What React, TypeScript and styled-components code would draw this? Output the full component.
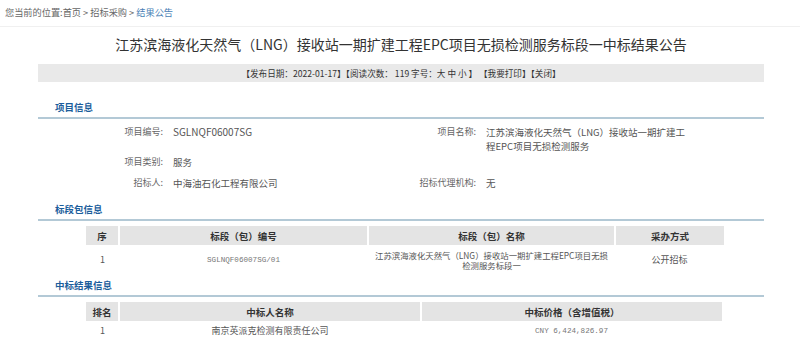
import React from 'react'
import styled, { createGlobalStyle } from 'styled-components'

const GlobalStyle = createGlobalStyle`
	body {
		margin: 0;
		background: #fff;
		font-family: "Noto Sans CJK SC", "Noto Sans", sans-serif;
		color: #333;
	}
`;

const Breadcrumb = styled.div`
	height: 26px;
	line-height: 24px;
	padding-left: 5px;
	font-size: 9.2px;
	color: #666;
	border-bottom: 1px solid #f0f0f0;
	a {
		color: #666;
		text-decoration: none;
	}
	a.current {
		color: #4a7fb5;
	}
`;

const Content = styled.div`
	padding: 0 36px 0 38px;
`;

const Title = styled.h1`
	margin: 7px 0 0;
	font-size: 14px;
	line-height: 20px;
	font-weight: normal;
	text-align: center;
	color: #333;
`;

const InfoBar = styled.div`
	margin-top: 10px;
	height: 18px;
	line-height: 18px;
	background: #e9e9e9;
	text-align: center;
	font-size: 8.6px;
	color: #333;
`;

const SectionTitle = styled.div<{ $mt: number }>`
	margin-top: ${({ $mt }) => $mt}px;
	height: 19px;
	line-height: 19px;
	padding-left: 17px;
	font-size: 9.5px;
	font-weight: bold;
	color: #1c5e9c;
	border-bottom: 2px solid #b3c9d6;
`;

const InfoGrid = styled.div`
	padding-top: 6px;
	display: flex;
	flex-direction: column;
`;

const InfoRow = styled.div<{ $mt?: number }>`
	margin-top: ${({ $mt }) => $mt ?? 0}px;
	display: grid;
	grid-template-columns: 125px 172px 121px 200px;
	column-gap: 10px;
	line-height: 14px;
	font-size: 9px;
`;

const Label = styled.div`
	text-align: right;
	color: #666;
`;

const Value = styled.div<{ $latin?: boolean }>`
	color: #555;
	font-size: ${({ $latin }) => ($latin ? '10px' : '9.5px')};
`;

const Table = styled.table<{ $mt: number }>`
	margin: ${({ $mt }) => $mt}px 0 0 48px;
	width: 632px;
	border-collapse: collapse;
	table-layout: fixed;
`;

const Th = styled.th<{ $w: number }>`
	width: ${({ $w }) => $w}px;
	height: 19px;
	padding: 0;
	background: #e4e4e4;
	border-left: 2px solid #fff;
	font-size: 9.5px;
	font-weight: bold;
	color: #333;
	text-align: center;
	&:first-child {
		border-left: none;
	}
`;

const Td = styled.td<{ $h: number; $mono?: boolean }>`
	height: ${({ $h }) => $h}px;
	padding: 0 3px;
	text-align: center;
	vertical-align: middle;
	color: ${({ $mono }) => ($mono ? '#777' : '#555')};
	font-size: ${({ $mono }) => ($mono ? '7.6px' : '9px')};
	font-family: ${({ $mono }) =>
		$mono ? '"Liberation Mono", "Noto Sans CJK SC", monospace' : 'inherit'};
	line-height: 10px;
`;

const TightText = styled.span`
	display: inline-block;
	font-size: 8.4px;
	line-height: 10px;
`;

export default function App() {
	return (
		<>
			<GlobalStyle />
			<Breadcrumb>
				您当前的位置:<a href="#">首页</a> &gt; <a href="#">招标采购</a> &gt;{' '}
				<a href="#" className="current">结果公告</a>
			</Breadcrumb>
			<Content>
				<Title>江苏滨海液化天然气（LNG）接收站一期扩建工程EPC项目无损检测服务标段一中标结果公告</Title>
				<InfoBar>
					【发布日期：2022-01-17】【阅读次数： 119 字号：大 中 小 】 【我要打印】【关闭】
				</InfoBar>

				<SectionTitle $mt={16}>项目信息</SectionTitle>
				<InfoGrid>
					<InfoRow>
						<Label>项目编号:</Label>
						<Value $latin>SGLNQF06007SG</Value>
						<Label>项目名称:</Label>
						<Value>江苏滨海液化天然气（LNG）接收站一期扩建工程EPC项目无损检测服务</Value>
					</InfoRow>
					<InfoRow $mt={2}>
						<Label>项目类别:</Label>
						<Value>服务</Value>
						<Label />
						<Value />
					</InfoRow>
					<InfoRow $mt={7}>
						<Label>招标人:</Label>
						<Value>中海油石化工程有限公司</Value>
						<Label>招标代理机构:</Label>
						<Value>无</Value>
					</InfoRow>
				</InfoGrid>

				<SectionTitle $mt={10}>标段包信息</SectionTitle>
				<Table $mt={5}>
					<thead>
						<tr>
							<Th $w={32}>序</Th>
							<Th $w={247}>标段（包）编号</Th>
							<Th $w={245}>标段（包）名称</Th>
							<Th $w={108}>采办方式</Th>
						</tr>
					</thead>
					<tbody>
						<tr>
							<Td $h={30}>1</Td>
							<Td $h={30} $mono>SGLNQF06007SG/01</Td>
							<Td $h={30}>
								<TightText>江苏滨海液化天然气（LNG）接收站一期扩建工程EPC项目无损检测服务标段一</TightText>
							</Td>
							<Td $h={30}>公开招标</Td>
						</tr>
					</tbody>
				</Table>

				<SectionTitle $mt={1}>中标结果信息</SectionTitle>
				<Table $mt={5}>
					<thead>
						<tr>
							<Th $w={32}>排名</Th>
							<Th $w={300}>中标人名称</Th>
							<Th $w={300}>中标价格（含增值税）</Th>
						</tr>
					</thead>
					<tbody>
						<tr>
							<Td $h={19}>1</Td>
							<Td $h={19}>南京英派克检测有限责任公司</Td>
							<Td $h={19} $mono>CNY 6,424,826.97</Td>
						</tr>
					</tbody>
				</Table>
			</Content>
		</>
	);
}
